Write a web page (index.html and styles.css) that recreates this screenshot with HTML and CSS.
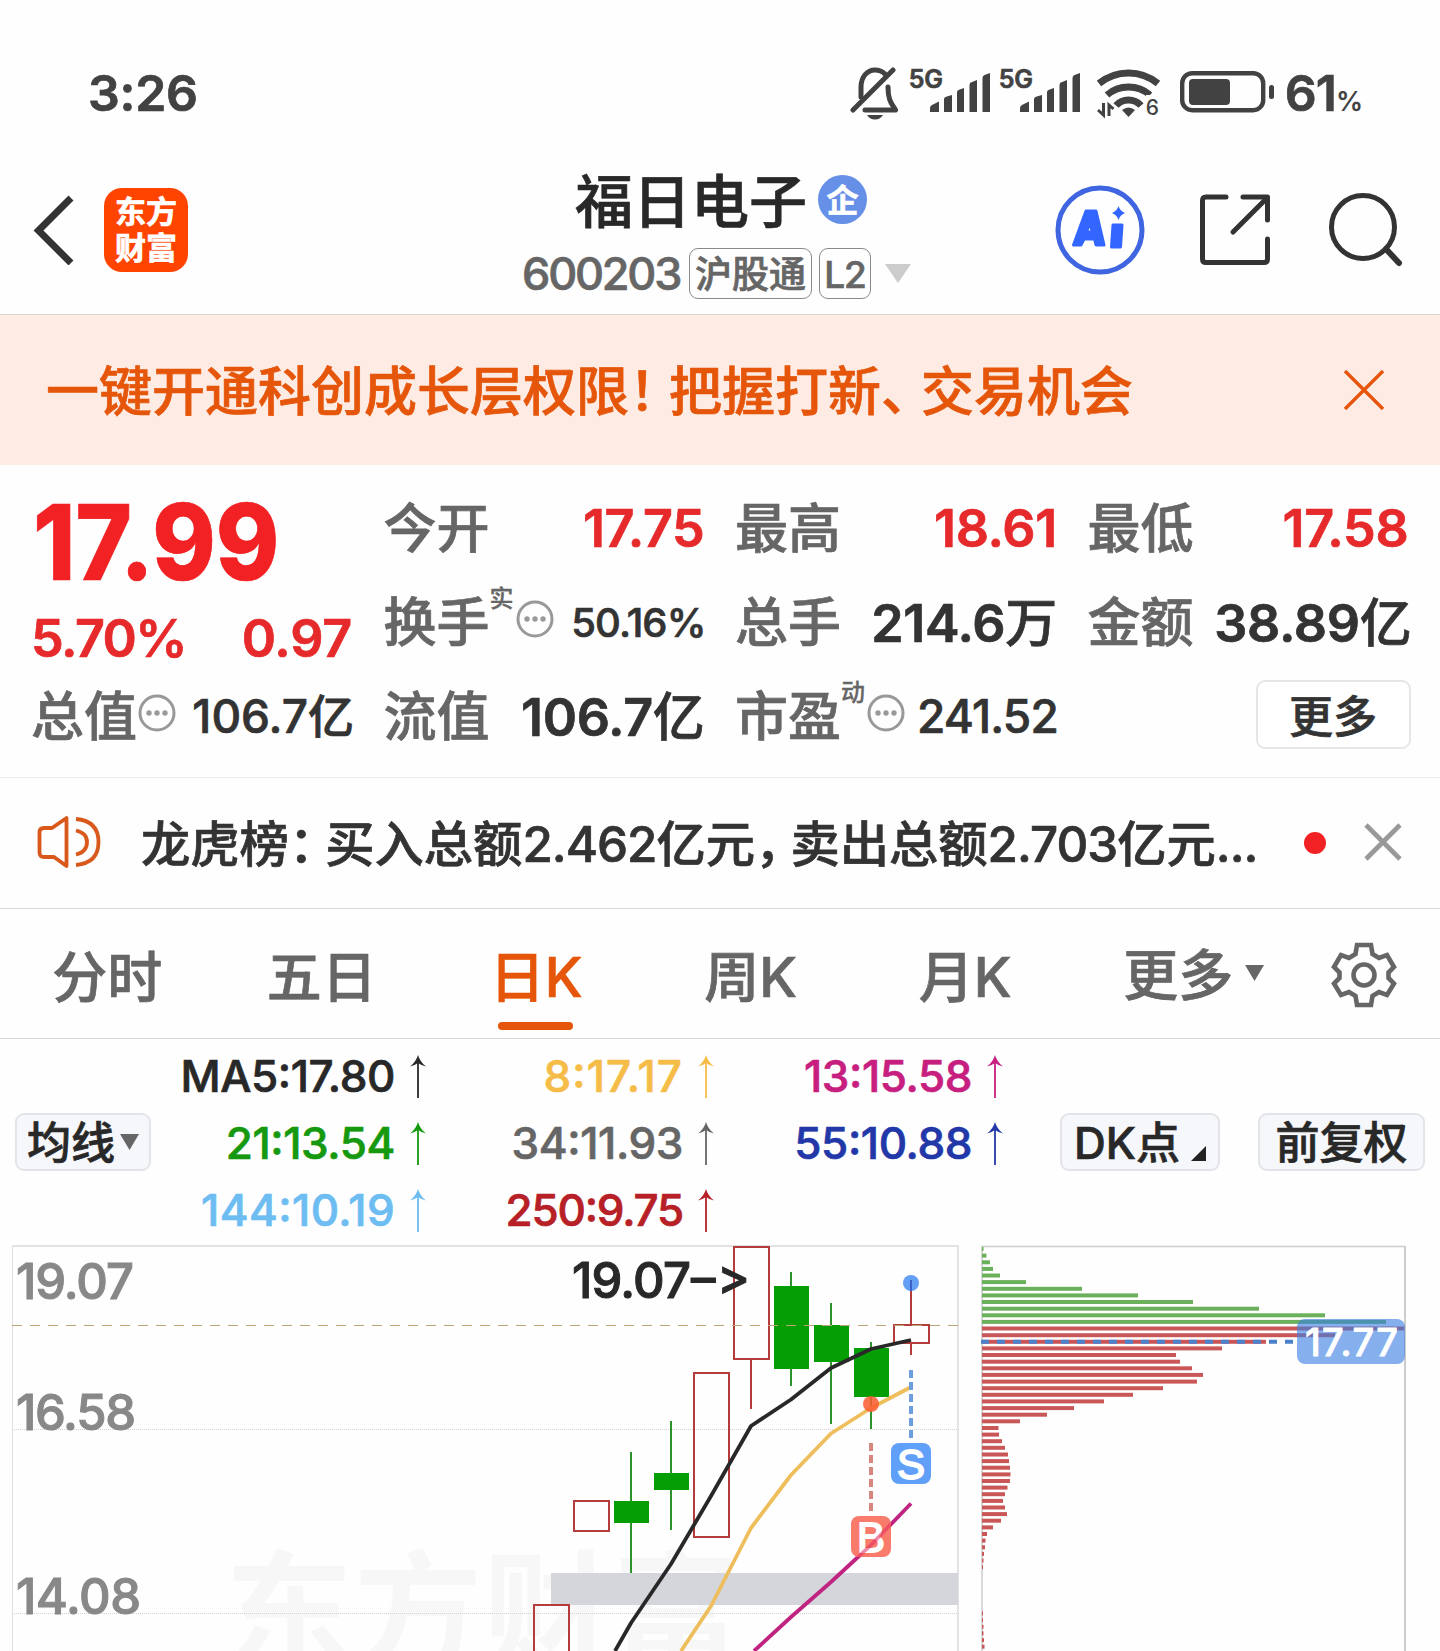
FILE: index.html
```html
<!DOCTYPE html>
<html lang="zh-CN">
<head>
<meta charset="utf-8">
<title>福日电子 600203</title>
<link rel="stylesheet" href="styles.css">
</head>
<body>
<svg class="defs" width="0" height="0" aria-hidden="true">
  <symbol id="more" viewBox="0 0 38 38"><circle cx="19" cy="19" r="17" fill="none" stroke="#999" stroke-width="3"/><g fill="#999"><circle cx="11" cy="19" r="2.7"/><circle cx="19" cy="19" r="2.7"/><circle cx="27" cy="19" r="2.7"/></g></symbol>
  <symbol id="up" viewBox="0 0 16 43"><path d="M8 5V43" stroke="currentColor" stroke-width="1.8"/><path d="M8 0Q10 7 16 11.5Q11 10 8 8Q5 10 0 11.5Q6 7 8 0Z" fill="currentColor"/></symbol>
  <symbol id="bars" viewBox="0 0 60 40"><g fill="#424242"><path d="M0 39V35Q0 33 2 32L9 28.500V39Z"/><path d="M14 39V26Q14 24.500 16 23.800L22 22V39Z"/><path d="M27 39V19Q27 17.500 29 16.800L34 15V39Z"/><path d="M39.500 39V12Q39.500 10 41.500 9.200L47 7V39Z"/><path d="M52.500 39V5Q52.500 3 54.500 2L60 0V39Z"/></g></symbol>
</svg>

<header class="status">
  <span class="time">3:26</span>
  <div class="status-icons">
    <svg class="bell" viewBox="0 0 50 54" width="50" height="54"><g fill="none" stroke="#424242" stroke-width="5" stroke-linecap="round" stroke-linejoin="round"><path d="M11 30V20C11 10 17 3 25 3C29 3 33 5 35 7"/><path d="M38 20C38 34 42 37 45.500 43H15"/><path d="M43 3L3 43"/></g><path d="M17 48H33Q30 52.500 25 52.500Q20 52.500 17 48Z" fill="#424242"/></svg>
    <span class="net">5G</span><svg class="sig" width="60" height="40"><use href="#bars"/></svg>
    <span class="net net2">5G</span><svg class="sig" width="60" height="40"><use href="#bars"/></svg>
    <div class="wifi"><svg viewBox="0 0 64 50" width="64" height="50"><g fill="none" stroke="#424242" stroke-width="7"><path d="M2 14.500Q15 4 31.500 4Q48 4 61 14.500"/><path d="M10 26Q19 18 31.500 18Q44 18 53 26"/><path d="M19 36.500Q24 31 31.500 31Q39 31 44 36.500"/></g><path d="M25 41Q31.500 36 38 41L31.500 48Z" fill="#424242"/><path d="M6.500 34V46L1 41M12 47V36L16.500 40" fill="none" stroke="#424242" stroke-width="3"/></svg><span>6</span></div>
    <svg class="battery" viewBox="0 0 94 42" width="94" height="42"><rect x="2.200" y="2.200" width="81" height="37" rx="10" fill="none" stroke="#424242" stroke-width="4.400"/><rect x="9" y="8" width="41" height="26" rx="4" fill="#424242"/><rect x="89" y="14" width="5" height="14" rx="2.500" fill="#424242"/></svg>
    <span class="pct">61<small>%</small></span>
  </div>
</header>

<nav class="topbar">
  <svg class="back" viewBox="0 0 44 70" width="44" height="70"><path d="M40 3L7.500 35.500L40 68" fill="none" stroke="#333" stroke-width="7"/></svg>
  <div class="logo"><span>东方</span><span>财富</span></div>
  <div class="stock">
    <div class="stock-name">福日电子<i class="corp">企</i></div>
    <div class="stock-meta"><span class="code">600203</span><span class="tag tag-hgt">沪股通</span><span class="tag tag-l2">L2</span><svg width="26" height="19" viewBox="0 0 26 19"><path d="M0 0H26L13 19Z" fill="#ccc"/></svg></div>
  </div>
  <div class="actions">
    <svg class="ai" viewBox="0 0 90 90" width="90" height="90"><circle cx="45" cy="45" r="42" fill="none" stroke="#3f66e0" stroke-width="5"/><g fill="#3366ff" stroke="#3366ff" stroke-width="3" stroke-linejoin="round"><path fill-rule="evenodd" d="M31 26H41L49 60H41L39.500 54H29L26 60H18.500ZM34.500 38L31.500 47H37.500Z"/><path d="M58 40H67L65.500 62H56.500Z"/></g><path d="M63.500 21Q65 26 70 28Q65 30 63.500 35Q62 30 57 28Q62 26 63.500 21Z" fill="#3366ff"/></svg>
    <svg class="share" viewBox="0 0 74 74" width="74" height="74"><g fill="none" stroke="#333" stroke-width="5" stroke-linecap="round" stroke-linejoin="round"><path d="M28 4H8Q4.500 4 4.500 7.500V66Q4.500 69.500 8 69.500H66Q69.500 69.500 69.500 66V46"/><path d="M45 4H69.500V27"/><path d="M68 6L35 39"/></g></svg>
    <svg class="search" viewBox="0 0 76 76" width="76" height="76"><circle cx="35" cy="35" r="31.500" fill="none" stroke="#333" stroke-width="5"/><path d="M58 57L71 71" stroke="#333" stroke-width="6" stroke-linecap="round"/></svg>
  </div>
</nav>

<section class="banner">
  <p>一键开通科创成长层权限<span class="tight">！</span>把握打新<span class="tight">、</span>交易机会</p>
  <svg viewBox="0 0 40 40" width="40" height="40"><path d="M1 1L39 39M39 1L1 39" stroke="#e5560b" stroke-width="3.400"/></svg>
</section>

<section class="quote">
  <div class="price-box">
    <div class="price">17.99</div>
    <div class="change"><span>5.70%</span><span class="diff">0.97</span></div>
  </div>
  <div class="cell"><label>今开</label><b class="red">17.75</b></div>
  <div class="cell"><label>最高</label><b class="red">18.61</b></div>
  <div class="cell"><label>最低</label><b class="red">17.58</b></div>
  <div class="cell"><label>换手</label><sup>实</sup><svg width="38" height="38"><use href="#more"/></svg><b class="s40">50.16%</b></div>
  <div class="cell"><label>总手</label><b>214.6<em>万</em></b></div>
  <div class="cell"><label>金额</label><b>38.89<em>亿</em></b></div>
  <div class="cell"><label>总值</label><svg width="38" height="38"><use href="#more"/></svg><b class="s46">106.7<em>亿</em></b></div>
  <div class="cell"><label>流值</label><b>106.7<em>亿</em></b></div>
  <div class="cell"><label>市盈</label><sup>动</sup><svg width="38" height="38"><use href="#more"/></svg><b class="s46 pe">241.52</b></div>
  <div class="cell"><button class="more-btn">更多</button></div>
</section>

<section class="news">
  <svg class="speaker" viewBox="0 0 64 54" width="64" height="54"><g fill="none" stroke="#d9591c" stroke-width="3.800" stroke-linejoin="round"><path d="M29.500 2V50L17 41H7Q2.500 41 2.500 36.500V16.500Q2.500 12 7 12H15Z"/><path d="M39 14.500Q50 17 50 26Q50 36 39 38.500"/><path d="M39 3Q61.500 5 61.500 26Q61.500 47 39 49"/></g></svg>
  <p>龙虎榜<span class="tight">：</span>买入总额<span class="num">2.462</span>亿元<span class="tight comma">，</span>卖出总额<span class="num">2.703</span>亿元<span class="num">...</span></p>
  <i class="dot"></i>
  <svg class="close" viewBox="0 0 38 38" width="38" height="38"><path d="M2 2L36 36M36 2L2 36" stroke="#999" stroke-width="4.600"/></svg>
</section>

<nav class="tabs">
  <span>分时</span><span>五日</span><span class="active">日K</span><span>周K</span><span>月K</span>
  <span class="tab-more">更多<svg width="19" height="16" viewBox="0 0 19 16"><path d="M0 0H19L9.500 16Z" fill="#666"/></svg></span>
  <svg class="gear" viewBox="0 0 66 66" width="66" height="66"><g fill="none" stroke="#666" stroke-width="4.600" stroke-linejoin="miter"><path d="M26 3H40L41.500 12L48 16L56 13L63 25L57.500 30.500V36L63 41.500L56 53L48 50L41.500 54L40 63H26L24.500 54L18 50L10 53L3 41.500L8.500 36V30.500L3 25L10 13L18 16L24.500 12Z"/><circle cx="33" cy="33" r="10.500"/></g></svg>
</nav>

<section class="ma">
  <button class="chip chip-ma">均线<svg width="19" height="16" viewBox="0 0 19 16"><path d="M0 0H19L9.500 16Z" fill="#666"/></svg></button>
  <div class="ma-grid">
    <span class="c5">MA5:17.80<svg width="16" height="43"><use href="#up"/></svg></span>
    <span class="c8">8:17.17<svg width="16" height="43"><use href="#up"/></svg></span>
    <span class="c13">13:15.58<svg width="16" height="43"><use href="#up"/></svg></span>
    <span class="c21">21:13.54<svg width="16" height="43"><use href="#up"/></svg></span>
    <span class="c34">34:11.93<svg width="16" height="43"><use href="#up"/></svg></span>
    <span class="c55">55:10.88<svg width="16" height="43"><use href="#up"/></svg></span>
    <span class="c144">144:10.19<svg width="16" height="43"><use href="#up"/></svg></span>
    <span class="c250">250:9.75<svg width="16" height="43"><use href="#up"/></svg></span>
  </div>
  <button class="chip chip-dk">DK点<svg width="15" height="15" viewBox="0 0 15 15"><path d="M15 0V15H0Z" fill="#222"/></svg></button>
  <button class="chip chip-fq">前复权</button>
</section>

<svg class="chart" viewBox="0 1245 1440 406" width="1440" height="406">
  <text class="watermark" x="225" y="1659" textLength="515">东方财富</text>
  <path d="M12.500 1651V1246" stroke="#e0e0e0"/>
  <path d="M12 1246H958V1651" fill="none" stroke="#e3e3e3" stroke-width="2"/>
  <path d="M12 1429.500H958M12 1613.500H958" stroke="#d2d2d2" stroke-dasharray="1 1"/>
  <text class="axis" x="16" y="1299" textLength="118">19.07</text>
  <text class="axis" x="16" y="1430" textLength="120">16.58</text>
  <text class="axis" x="16" y="1613.500" textLength="125">14.08</text>
  <rect x="551" y="1573" width="407" height="32" fill="#d5d6dc"/>
  <g id="candles"></g>
  <path d="M12 1325.500H958" stroke="#b9a577" stroke-width="1.200" stroke-dasharray="10 8"/>
  <g fill="none" stroke-linejoin="round">
    <polyline points="615,1651 631,1623 671,1564 711,1496 751,1426 791,1399.500 831,1368 871,1349 911,1340" stroke="#282828" stroke-width="3.800"/>
    <polyline points="681,1651 711,1606 751,1528 791,1475 831,1433.500 871,1408 911,1387" stroke="#efbe5c" stroke-width="3.800"/>
    <polyline points="754,1651 791,1617 831,1582 871,1545 911,1503.500" stroke="#be2480" stroke-width="3.800"/>
  </g>
  <text class="peak" x="572" y="1298" textLength="119">19.07</text>
  <text class="peak" x="691" y="1298" textLength="59">–&gt;</text>
  <circle cx="911" cy="1283" r="8" fill="#639ff5"/><path d="M911 1280V1291" stroke="#3b5fc4" stroke-width="2"/>
  <circle cx="871" cy="1404" r="8" fill="#f95a30" fill-opacity=".85"/>
  <path d="M911 1370V1438" stroke="#6c9fdc" stroke-width="4" stroke-dasharray="8 4"/>
  <path d="M871 1443V1511" stroke="#d6877d" stroke-width="4" stroke-dasharray="8 4"/>
  <rect x="891" y="1443" width="40" height="41" rx="8" fill="#61a0f8"/>
  <text class="mark" x="911" y="1478.500">S</text>
  <rect x="851" y="1516" width="40" height="41" rx="8" fill="#f87b6c"/>
  <text class="mark" x="871" y="1551.500">B</text>
  <path d="M858 1557L871 1545L891 1524" stroke="#e02860" stroke-opacity=".55" stroke-width="3.600" fill="none"/>

  <path d="M982 1651V1246.500H1405" fill="none" stroke="#ccc" stroke-width="1.500"/>
  <g id="chips"></g>
  <path d="M1405 1246V1651" stroke="#ccc" stroke-width="2"/>
  <path d="M981 1341.700H1296" stroke="#4b80cb" stroke-width="4" stroke-dasharray="8 8"/>
  <rect x="1297" y="1319" width="108" height="45" rx="8" fill="#3a80e2" fill-opacity=".62"/>
  <text class="cost" x="1305" y="1355.500" textLength="93">17.77</text>
</svg>
<script src="chart.js"></script>
</body>
</html>
```
FILE: styles.css
```css
* { box-sizing: border-box; }
body { margin: 0; width: 1440px; height: 1651px; overflow: hidden; background: #fefefe; color: #333; font-family: Inter, "Noto Sans CJK SC", sans-serif; font-weight: 500; -webkit-text-stroke: .7px currentColor; }
p { margin: 0; white-space: nowrap; }
svg { display: block; flex: none; }
button { font: inherit; color: inherit; padding: 0; -webkit-text-stroke: inherit; }
em { font-style: normal; }
.defs { position: absolute; }

.status { height: 150px; padding: 64px 77px 0 88px; display: flex; justify-content: space-between; color: #424242; }
.time { font-size: 50px; line-height: 58px; font-weight: 600; letter-spacing: -.3px; }
.status-icons { display: flex; align-items: flex-start; margin-right: 1px; }
.bell { margin-top: 3px; }
.net { font-size: 25px; line-height: 30px; font-weight: 600; width: 34px; margin-left: 9px; letter-spacing: -.2px; }
.sig { margin: 9px 0 0 -13px; }
.sig + .net { margin-left: 9px; }
.wifi { position: relative; margin: 5px 0 0 17px; }
.wifi span { position: absolute; left: 49px; top: 26px; font-size: 21px; line-height: 26px; background: #fefefe; -webkit-text-stroke: 0; }
.battery { margin: 7px 0 0 19px; }
.pct { font-size: 50px; line-height: 58px; font-weight: 600; margin-left: 11px; letter-spacing: -1px; white-space: nowrap; }
.pct small { font-size: 27px; -webkit-text-stroke: 0; }

.topbar { height: 164px; padding: 0 36px 0 31px; display: grid; grid-template-columns: 73px 85px 1fr auto; align-items: start; }
.back { margin-top: 45px; }
.logo { width: 84px; height: 84px; margin-top: 38px; padding-bottom: 5px; border-radius: 18px; background: #ff4400; color: #fff; display: flex; flex-direction: column; align-items: center; justify-content: center; font-family: "Noto Sans CJK SC", sans-serif; font-weight: 700; font-size: 31px; line-height: 36px; }
.stock { display: flex; flex-direction: column; padding-left: 333px; }
.stock-name { display: flex; align-items: center; margin: 22px 0 0 53px; height: 60px; font-size: 58px; line-height: 60px; color: #282828; }
.corp { width: 49px; height: 49px; margin-left: 11px; margin-bottom: 6px; border-radius: 50%; background: #6690e8; color: #fff; font: 700 32px/47px "Noto Sans CJK SC", sans-serif; text-align: center; }
.stock-meta { display: flex; align-items: center; height: 52px; margin-top: 15px; color: #666; }
.code { width: 157px; font-size: 45px; line-height: 52px; margin-right: 10px; padding-top: 1px; letter-spacing: -2.200px; }
.tag { height: 51px; border: 1.5px solid #8a8a8a; border-radius: 9px; font-size: 37px; line-height: 51px; text-align: center; white-space: nowrap; }
.tag-hgt { width: 123px; }
.tag-l2 { width: 52px; margin: 0 14px 0 7px; letter-spacing: -1px; }
.actions { display: flex; }
.ai { margin: 35px 53px 0 0; }
.share { margin: 43px 56px 0 0; }
.search { margin: 42px 0 0; }

.banner { height: 151px; padding: 0 56px 0 46px; border-top: 1px solid #d8d2d0; background: #feece4; color: #e5560b; display: flex; align-items: center; justify-content: space-between; font-size: 53px; }
.banner p { padding-bottom: 4px; }
.tight { letter-spacing: -13px; }

.quote { height: 312px; padding: 16px 30px 0 33px; display: grid; grid-template-columns: 319px 318px 319px 321px; grid-template-rows: 94px 94px 94px; column-gap: 33.500px; }
.price-box { grid-row: span 2; }
.price { width: 262px; height: 122px; font-size: 105px; line-height: 122px; font-weight: 800; color: #f22123; transform: scaleX(.915); transform-origin: left; }
.change { display: flex; justify-content: space-between; margin-left: -2px; font-size: 52px; line-height: 71px; color: #e62a2b; letter-spacing: -1.5px; font-weight: 600; }
.diff { letter-spacing: -.2px; }
.cell { display: flex; align-items: center; }
.cell label { margin: 0 0 6px -2px; font-size: 53px; color: #666; }
.cell:nth-child(n+2) label { width: 107px; }
.cell b { margin: 0 -1px 0 auto; font-size: 52px; font-weight: 600; letter-spacing: -.3px; white-space: nowrap; }
.cell em { font-weight: 500; }
.cell:nth-child(4n) b { margin-right: 2px; }
.cell b.red { color: #e62a2b; }
.cell b:has(em) { margin-bottom: 6px; }
.cell b.s40 { font-size: 40px; font-weight: 500; letter-spacing: -.9px; margin-right: -2px; }
.cell b.s46 { font-size: 46px; font-weight: 500; letter-spacing: 0; }
.cell:nth-child(8) b { margin-right: -2px; }
.cell b.pe { letter-spacing: -.8px; margin-right: -2px; }
.cell sup { width: 24px; margin: 0 0 46px -1px; font-size: 24px; line-height: 26px; color: #666; vertical-align: 0; -webkit-text-stroke: .3px; }
.cell svg { margin-bottom: 6px; }
.cell sup + svg { margin-left: 2px; }
.more-btn { width: 155px; height: 69px; margin: 0 0 3px auto; padding-bottom: 2px; border: 2px solid #e6e6e6; border-radius: 9px; background: #fff; font-size: 44px; }

.news { height: 131px; padding: 0 38px 0 37px; border-top: 1px solid #ececec; display: flex; align-items: center; }
.news p { width: 1163px; margin-left: 40px; padding-bottom: 6px; font-size: 49.300px; }
.num { letter-spacing: -1px; }
.comma { letter-spacing: -14px; }
.dot { flex: none; width: 22px; height: 22px; margin-right: 38px; border-radius: 50%; background: #f22123; }
.close { margin-bottom: 2px; }

.tabs { height: 131px; padding: 0 43px 0 0; border: solid #d8d8d8; border-width: 1px 0; display: grid; grid-template-columns: repeat(5, 214.500px) 1fr auto; align-items: center; justify-items: center; font-size: 55px; color: #666; line-height: 132px; }
.tabs span { height: 129px; }
.tabs .active { position: relative; color: #e5560b; }
.active::after { content: ""; position: absolute; left: 50%; top: 111px; width: 75px; height: 8px; margin-left: -38px; border-radius: 4px; background: #e5560b; }
.tabs .tab-more { display: flex; align-items: center; gap: 12px; margin-right: 16px; height: 132px; }
.tab-more svg { margin-bottom: 4px; }

.ma { height: 206px; padding: 0 15px; display: flex; align-items: center; color: #282828; }
.chip { height: 58px; border: 2px solid #e2e4e9; border-radius: 9px; background: #f6f7fa; font-size: 44px; line-height: 54px; padding-top: 2px; display: flex; align-items: center; justify-content: center; white-space: nowrap; }
.chip-ma { width: 136px; gap: 5px; }
.chip-ma svg { margin-bottom: 3px; }
.chip-dk { width: 160px; margin-left: auto; gap: 11px; }
.chip-dk svg { margin-top: 21px; }
.chip-fq { width: 167px; margin-left: 38px; }
.ma-grid { display: grid; grid-template-columns: 275px 288px 289px; grid-template-rows: repeat(3, 67px); padding-top: 2px; font-size: 44px; font-feature-settings: "case"; }
.ma-grid span { display: flex; align-items: center; justify-content: flex-end; gap: 15px; letter-spacing: -.4px; }
.ma-grid .c8 { color: #f5bd48; letter-spacing: 1.100px; }
.c13 { color: #c71f80; }
.c21 { color: #16980f; }
.c34 { color: #666; }
.c55 { color: #2338a8; }
.ma-grid .c144 { color: #6dbdf3; letter-spacing: .4px; }
.ma-grid .c250 { color: #b62026; letter-spacing: -1.200px; }

.axis { font-size: 49px; fill: #888; -webkit-text-stroke: 1px #888; }
.peak { font-size: 49px; fill: #282828; font-variant-ligatures: none; font-feature-settings: "calt" 0, "case"; -webkit-text-stroke: 1px #282828; stroke: #282828; stroke-width: 1px; }
.mark { font-family: "Liberation Sans", sans-serif; font-weight: 400; font-size: 42px; fill: #fff; stroke: #fff; stroke-width: 1.800px; text-anchor: middle; -webkit-text-stroke: 1.800px #fff; }
.axis { stroke: #888; stroke-width: 1px; }
.cost { font-size: 38px; fill: #fff; stroke: #fff; stroke-width: .8px; -webkit-text-stroke: .8px #fff; }
.watermark { font-family: "Noto Sans CJK SC", sans-serif; font-weight: 700; font-size: 128px; fill: #f7f7f7; -webkit-text-stroke: 0; }
```
FILE: chart.js
```js
const NS = 'http://www.w3.org/2000/svg';
function add(parent, name, attrs) {
  const el = document.createElementNS(NS, name);
  for (const key in attrs) el.setAttribute(key, attrs[key]);
  parent.appendChild(el);
}

// centre x, body top, body bottom, wick top, wick bottom, rising
const candles = [
  [551, 1604, 1670, 1604, 1670, true],
  [591, 1500, 1532, 1500, 1532, true],
  [631, 1501, 1523, 1452, 1573, false],
  [671, 1473, 1490, 1421, 1530, false],
  [711, 1372, 1538, 1372, 1538, true],
  [751, 1246, 1360, 1246, 1409, true],
  [791, 1286, 1369, 1272, 1386, false],
  [831, 1325, 1362, 1303, 1424, false],
  [871, 1348, 1397, 1342, 1429, false],
  [911, 1324, 1344, 1280, 1355, true]
];
const candleLayer = document.getElementById('candles');
for (const [x, top, bottom, high, low, rising] of candles) {
  const color = rising ? '#b43c3c' : '#2b952b';
  add(candleLayer, 'path', { d: `M${x} ${high}V${top}M${x} ${bottom}V${low}`, stroke: color, 'stroke-width': 2 });
  if (rising) add(candleLayer, 'rect', { x: x - 17, y: top + 1, width: 35, height: bottom - top - 2, fill: 'none', stroke: color, 'stroke-width': 2 });
  else add(candleLayer, 'rect', { x: x - 17, y: top, width: 35, height: bottom - top, fill: '#059f05' });
}

// chip distribution by price level, top down
const levels = [1.5, 4.5, 8, 11, 18, 44, 100, 156, 211, 277, 343, 404,
  423, 353, 284, 240, 194, 198, 210, 221, 215, 181, 151, 122, 92, 65, 38, 16.5, 17, 20, 23, 26,
  27, 28, 28.5, 28, 25.5, 23, 21, 23, 25, 19, 11, 5, 3.5, 3, 2, 1.5, 1,
  0, 0, 0, 0, 0, 0, 1, 1, 1.5, 1.5, 2, 2.5];
const chipLayer = document.getElementById('chips');
levels.forEach((w, i) => {
  if (w) add(chipLayer, 'rect', { x: 982, y: (1247 + i * 6.628).toFixed(1), width: w, height: 4, fill: i < 12 ? '#6bb15b' : '#ca5757' });
});
```
